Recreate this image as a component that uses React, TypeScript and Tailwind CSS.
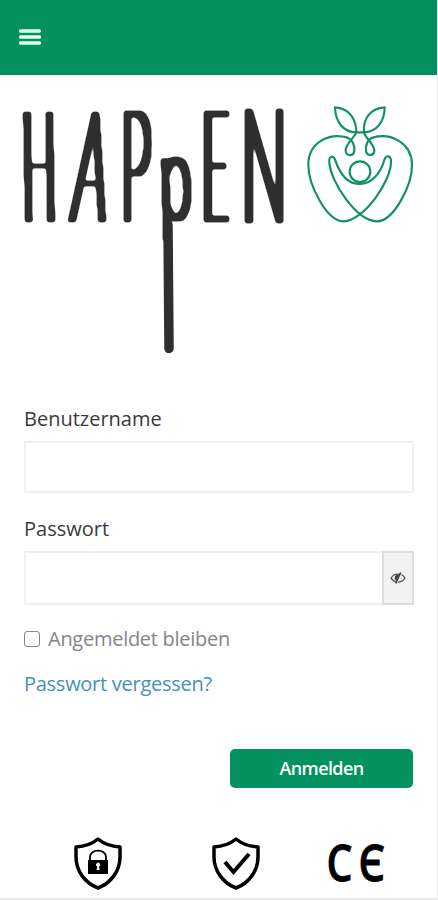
import { useState } from 'react';

// Each letter is placed on its own so it can be squeezed and tilted
const letters = [
  { char: 'H', x: 23.5, y: 220.5, sx: 0.44, sy: 1.54, skew: 1, thin: true },
  { char: 'A', x: 70.5, y: 220.5, sx: 0.52, sy: 1.54, skew: -4.5, thin: true },
  { char: 'P', x: 121, y: 220, sx: 0.53, sy: 1.53, skew: 0, thin: false },
  { char: 'p', x: 161, y: 218, sx: 0.57, sy: 1.17, skew: 1.5, thin: false },
  { char: 'E', x: 202.5, y: 220, sx: 0.44, sy: 1.52, skew: 0, thin: false },
  { char: 'N', x: 241.5, y: 221, sx: 0.61, sy: 1.56, skew: 0, thin: false },
];

function Logo() {
  const renderLetter = (item: (typeof letters)[number]) => (
    <text
      key={item.char}
      transform={`translate(${item.x} ${item.y}) skewX(${item.skew}) scale(${item.sx} ${item.sy})`}
      fontSize="100"
    >
      {item.char}
    </text>
  );

  return (
    <svg viewBox="0 55 438 310" className="-mt-5 block h-[310px] w-[438px] shrink-0" role="img" aria-label="HAPpEN">
      <defs>
        {/* Thicken the hairline letters, then round their corners */}
        <filter id="brush" filterUnits="userSpaceOnUse" x="0" y="75" width="438" height="290" colorInterpolationFilters="sRGB">
          <feComponentTransfer>
            <feFuncA type="linear" slope="5" intercept="0" />
          </feComponentTransfer>
          <feMorphology operator="dilate" radius="3 2" />
          <feGaussianBlur stdDeviation="1.8" />
          <feComponentTransfer>
            <feFuncA type="linear" slope="3.6" intercept="-0.9" />
          </feComponentTransfer>
        </filter>
        <filter id="brush-thin" filterUnits="userSpaceOnUse" x="0" y="75" width="438" height="290" colorInterpolationFilters="sRGB">
          <feComponentTransfer>
            <feFuncA type="linear" slope="5" intercept="0" />
          </feComponentTransfer>
          <feMorphology operator="dilate" radius="3 1" />
          <feGaussianBlur stdDeviation="1.6" />
          <feComponentTransfer>
            <feFuncA type="linear" slope="3.6" intercept="-0.95" />
          </feComponentTransfer>
        </filter>
      </defs>

      <g className="font-[Lato,sans-serif] font-thin" fill="#2f2f31">
        <g filter="url(#brush-thin)">{letters.filter((l) => l.thin).map(renderLetter)}</g>
        <g filter="url(#brush)">{letters.filter((l) => !l.thin).map(renderLetter)}</g>
      </g>
      {/* Long tail under the small p */}
      <line x1="168" y1="225" x2="169" y2="348.5" stroke="#2f2f31" strokeWidth="9.5" strokeLinecap="round" />

      {/* Apple */}
      <g transform="translate(295 95) scale(0.3333)" fill="none" stroke="#109167" strokeWidth="6.5" strokeLinecap="round" strokeLinejoin="round">
        <path d="M184 112C184 76 165 39 120 37C121 78 143 112 184 112H207C248 110 269 77 269 37C225 40 204 72 207 112" />
        <path d="M184 112C177 129 150 148 152 168C154 185 176 184 178 168C180 150 171 133 158 128C101 112 40 143 40 209C40 270 95 378 145 379C205 380 292 255 288 196C286 180 272 180 268 195C257 235 229 267 195 267C158 267 134 235 121 196C116 179 101 183 103 202C107 263 186 379 246 379C296 379 352 270 351 209C350 145 290 112 233 128C219 132 211 150 213 168C215 184 236 184 238 168C240 150 213 132 207 112" />
        <circle cx="195" cy="230" r="31" />
      </g>
    </svg>
  );
}

const SHIELD = 'M24 2C30 7 38 9.5 46 10V20C46 34 37 46 24 51C11 46 2 34 2 20V10C10 9.5 18 7 24 2Z';

export default function App() {
  const [username, setUsername] = useState('');
  const [password, setPassword] = useState('');
  const [showPassword, setShowPassword] = useState(false);

  return (
    <div className="flex h-[900px] w-[438px] flex-col overflow-hidden border-r border-b-2 border-[#e9e9e9] bg-white font-['Open_Sans',sans-serif]">
      <header className="flex h-[75px] shrink-0 items-center bg-[#03925f] pl-[19px]">
        <button aria-label="Menü" className="-mt-0.5 block">
          <svg width="22" height="18" viewBox="0 0 22 18" stroke="#e0fff2" strokeWidth="3.4" strokeLinecap="round">
            <path d="M1.6 3H20.4M1.6 9H20.4M1.6 15H20.4" />
          </svg>
        </button>
      </header>

      <Logo />

      <form className="flex flex-col px-6 pt-[40px]" onSubmit={(e) => e.preventDefault()}>
        <label htmlFor="username" className="text-[20px] leading-7 text-[#3a3a3d]">Benutzername</label>
        <input
          id="username"
          value={username}
          onChange={(e) => setUsername(e.target.value)}
          className="mt-2 h-[52px] w-[390px] border-2 border-[#f0f0f0] px-3 text-lg outline-none"
        />

        <label htmlFor="password" className="mt-[22px] text-[20px] leading-7 text-[#3a3a3d]">Passwort</label>
        <div className="mt-2 flex h-[54px] w-[390px]">
          <input
            id="password"
            type={showPassword ? 'text' : 'password'}
            value={password}
            onChange={(e) => setPassword(e.target.value)}
            className="min-w-0 flex-1 border-2 border-r-0 border-[#f0f0f0] px-3 text-lg outline-none"
          />
          <button
            type="button"
            aria-label="Passwort anzeigen"
            onClick={() => setShowPassword(!showPassword)}
            className="flex w-8 items-center justify-center border-2 border-[#dddddd] bg-[#f2f2f2]"
          >
            <svg width="16" height="12" viewBox="0 0 16 12" fill="none" stroke="#444" strokeWidth="1.2" strokeLinecap="round">
              <path d="M6.5 10C4 9.5 2 8 1 6C3 3 5.2 2 8 2L10 2.2M12 3C13.5 3.8 14.5 5 15 6C13.5 8.6 11 10 8.5 10.2" />
              <path d="M10.5 1L6 11" strokeWidth="1.5" />
              <path d="M7.8 3.2C5 3.5 4.5 6.5 6.3 8L8.3 3.5Z" fill="#444" />
            </svg>
          </button>
        </div>

        <label className="mt-5 flex items-center gap-2 text-[20px] leading-7 tracking-[-0.27px] text-[#85858a]">
          <input type="checkbox" className="h-4 w-4 appearance-none rounded-[3px] border-[1.5px] border-[#858585]" />
          Angemeldet bleiben
        </label>
        <a href="#" className="mt-[17px] text-[20px] leading-7 tracking-[-0.27px] text-[#4590c0]">Passwort vergessen?</a>

        <button type="submit" className="mt-[51px] h-[39px] w-[183px] self-end rounded-[5px] bg-[#03925f] text-[18px] font-semibold tracking-[-0.6px] text-white">
          Anmelden
        </button>
      </form>

      <footer className="mt-[38px] flex items-start pl-[74px]">
        <svg className="mt-[11px]" width="48" height="53" viewBox="0 0 48 53" fill="none" stroke="#000" strokeWidth="3.5">
          <path d={SHIELD} strokeLinejoin="round" />
          <path d="M16 25V20C16 11.5 32 11.5 32 20V25" strokeWidth="1.8" />
          <path d="M14 23H34V37H14Z" fill="#000" stroke="none" />
          <path d="M22.5 33L23.3 29.5A2 2 0 1 1 25 29.5L25.7 33Z" fill="#fff" stroke="none" />
        </svg>
        <svg className="mt-[11px] ml-[90px]" width="48" height="53" viewBox="0 0 48 53" fill="none" stroke="#000" strokeWidth="3.5">
          <path d={SHIELD} strokeLinejoin="round" />
          <path d="M13 25L21.5 35L37 17" strokeWidth="4" />
        </svg>
        <svg className="ml-[62px]" width="68" height="72" viewBox="0 0 68 72" role="img" aria-label="CE">
          <g className="font-['Open_Sans',sans-serif] font-semibold" fontSize="50" stroke="#000" strokeWidth="0.8">
            <text x="4.5" y="55" textLength="26" lengthAdjust="spacingAndGlyphs">C</text>
            <text x="36.5" y="55" textLength="26.5" lengthAdjust="spacingAndGlyphs">Є</text>
          </g>
        </svg>
      </footer>
    </div>
  );
}
